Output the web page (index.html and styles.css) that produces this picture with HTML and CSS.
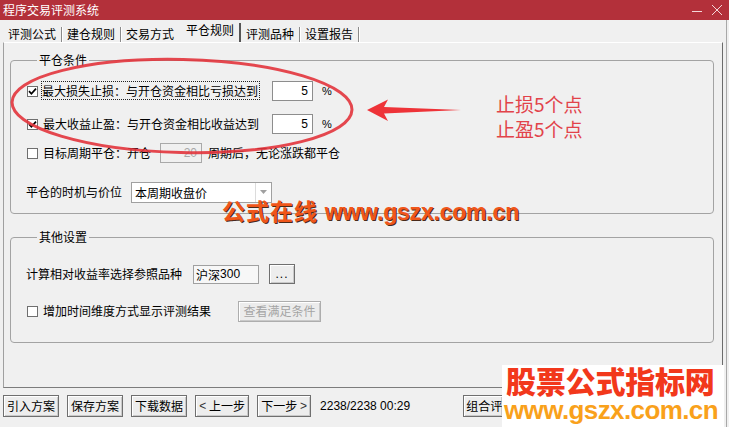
FILE: index.html
```html
<!DOCTYPE html>
<html lang="zh-CN">
<head>
<meta charset="utf-8">
<title>程序交易评测系统</title>
<link rel="stylesheet" href="styles.css">
</head>
<body>
<div class="titlebar">
  <span class="title">程序交易评测系统</span>
  <div class="winctl">
    <svg class="ctl" width="12" height="12" viewBox="0 0 12 12"><line x1="1" y1="7.5" x2="11" y2="7.5" stroke="#f3d6d8" stroke-width="1"/></svg>
    <svg class="ctl" width="12" height="12" viewBox="0 0 12 12"><path d="M1 1 L11 11 M11 1 L1 11" stroke="#f3d6d8" stroke-width="1" fill="none"/></svg>
  </div>
</div>
<div class="main">
  <div class="tabs">
    <span class="tab">评测公式</span>
    <span class="tab">建仓规则</span>
    <span class="tab nosep">交易方式</span>
    <span class="tab active">平仓规则</span>
    <span class="tab">评测品种</span>
    <span class="tab">设置报告</span>
  </div>
  <div class="panel">
    <fieldset class="group g1">
      <legend>平仓条件</legend>
      <div class="row r1">
        <span class="cb checked"><svg width="9" height="9" viewBox="0 0 9 9"><path d="M1 4.2 L3.4 6.8 L8 1.6" stroke="#000" stroke-width="1.7" fill="none"/></svg></span>
        <span class="lbl fixed"><span class="focus">最大损失止损：与开仓资金相比亏损达到</span></span>
        <span class="field num">5</span>
        <span class="pct">%</span>
      </div>
      <div class="row r2">
        <span class="cb checked"><svg width="9" height="9" viewBox="0 0 9 9"><path d="M1 4.2 L3.4 6.8 L8 1.6" stroke="#000" stroke-width="1.7" fill="none"/></svg></span>
        <span class="lbl fixed">最大收益止盈：与开仓资金相比收益达到</span>
        <span class="field num">5</span>
        <span class="pct">%</span>
      </div>
      <div class="row r3">
        <span class="cb"></span>
        <span class="lbl">目标周期平仓：开仓</span>
        <span class="field num disabled">20</span>
        <span class="lbl after">周期后，无论涨跌都平仓</span>
      </div>
      <div class="row r4">
        <span class="lbl plain">平仓的时机与价位</span>
        <div class="select">
          <span class="select-text">本周期收盘价</span>
          <span class="select-btn"><svg width="7" height="4" viewBox="0 0 7 4"><path d="M0 0 L7 0 L3.5 4 Z" fill="#a0a0a0"/></svg></span>
        </div>
      </div>
    </fieldset>
    <fieldset class="group g2">
      <legend>其他设置</legend>
      <div class="row ra">
        <span class="lbl plain">计算相对收益率选择参照品种</span>
        <span class="field ref">沪深<span class="digits">300</span></span>
        <span class="btn dots">...</span>
      </div>
      <div class="row rb">
        <span class="cb"></span>
        <span class="lbl">增加时间维度方式显示评测结果</span>
        <span class="btn disabled-btn">查看满足条件</span>
      </div>
    </fieldset>
  </div>
  <div class="bottombar">
    <span class="btn bb">引入方案</span>
    <span class="btn bb">保存方案</span>
    <span class="btn bb">下载数据</span>
    <span class="btn bb"><span class="ang">&lt;</span>&nbsp;上一步</span>
    <span class="btn bb">下一步&nbsp;<span class="ang">&gt;</span></span>
    <span class="status">2238/2238 00:29</span>
    <span class="btn bb combo">组合评</span>
  </div>
</div>

<svg class="annot" width="729" height="427" viewBox="0 0 729 427">
  <ellipse cx="182" cy="106" rx="170" ry="46.5" transform="rotate(1.3 182 106)" fill="none" stroke="#e2343c" stroke-width="3" opacity="0.9"/>
  <path d="M367 110 L388 99.5 L384 107 L461 110 L384 113.5 L388 121 Z" fill="#ee3338"/>
</svg>
<div class="note">止损5个点<br>止盈5个点</div>
<div class="wm-center"><span class="wm-cn">公式在线</span> <span class="wm-url">www.gszx.com.cn</span></div>
<div class="wm-corner">
  <div class="wm-title">股票公式指标网</div>
  <div class="wm-site">www.gszx.com.cn</div>
</div>
</body>
</html>
```
FILE: styles.css
```css
* { box-sizing: border-box; }
html, body { margin: 0; padding: 0; }
body {
  width: 729px;
  height: 427px;
  overflow: hidden;
  background: #f0f0f0;
  font-family: "Noto Sans CJK SC", "Liberation Sans", sans-serif;
  font-size: 12px;
  color: #000;
  position: relative;
}

.titlebar {
  height: 20px;
  background: #b3303a;
  color: #fff;
  display: flex;
  align-items: center;
  justify-content: space-between;
  padding-left: 3px;
  padding-right: 6px;
  line-height: 16px;
}
.title { font-size: 12px; }
.winctl { display: flex; gap: 8px; align-items: center; }
.ctl { display: block; }

.main {
  width: 727px;
  height: 407px;
  border-right: 1px solid #a8a8a8;
}

.tabs {
  height: 22px;
  display: flex;
  align-items: flex-end;
  padding-left: 3px;
}
.tab {
  height: 16px;
  line-height: 16px;
  padding: 0 6px 0 5px;
  position: relative;
  color: #000;
}
.tab::after {
  content: "";
  position: absolute;
  right: 0;
  top: 1px;
  bottom: 0;
  width: 1px;
  background: #8a8a8a;
  box-shadow: 1px 0 0 #ffffff;
}
.tab.nosep::after { display: none; }
.tab.active {
  line-height: 12px;
  padding-left: 6px;
  padding-right: 7px;
  height: 18px;
}
.tab.active::after {
  width: 2px;
  top: -1px;
  background: #555;
  box-shadow: none;
}

.panel {
  margin-left: 3px;
  width: 720px;
  height: 346px;
  border-top: 1px solid #ffffff;
  border-left: 1px solid #a0a0a0;
  border-right: 1px solid #6c6c6c;
  border-bottom: 1px solid #7c7c7c;
  padding: 0 8px 0 6px;
  overflow: hidden;
}

.group {
  margin: 0;
  padding: 0 0 0 16px;
  border: 1px solid #a3a3a3;
  border-radius: 4px;
  min-width: 0;
}
.group legend {
  margin-left: 10px;
  padding: 0 2px;
  line-height: 16px;
  height: 16px;
}
.g1 { margin-top: 9px; padding-bottom: 10px; }
.g2 { margin-top: 15px; padding-bottom: 20px; }

.row {
  display: flex;
  align-items: center;
  height: 22px;
}
.r1 { margin-top: 12px; }
.r2 { margin-top: 11px; }
.r3 { margin-top: 7px; }
.r4 { margin-top: 17px; height: 22px; }
.ra { margin-top: 19px; height: 20px; }
.rb { margin-top: 16px; height: 22px; }

.cb {
  width: 11px;
  height: 11px;
  border: 1px solid #6f6f6f;
  background: #fff;
  display: flex;
  align-items: center;
  justify-content: center;
  flex: none;
  margin-right: 5px;
}
.cb svg { display: block; }

.lbl { line-height: 16px; white-space: nowrap; }
.lbl.fixed { width: 229px; }
.lbl.plain { margin-left: -1px; }
.focus { outline: 1px dotted #222; outline-offset: 0; padding: 0 1px 0 0; margin-left: -1px; }
.lbl.after { margin-left: 6px; }

.field {
  height: 20px;
  background: #fff;
  border: 1px solid #8d8d8d;
  display: flex;
  align-items: center;
  white-space: nowrap;
}
.field.num {
  width: 41px;
  justify-content: flex-end;
  padding-right: 4px;
  font-family: "Liberation Sans", sans-serif;
  font-size: 12px;
}
.r3 .field.num { margin-left: 9px; width: 42px; }
.field.disabled {
  background: #f0f0f0;
  border-color: #a9a9a9;
  color: #a8a8a8;
}
.pct {
  margin-left: 9px;
  font-family: "Liberation Sans", sans-serif;
  font-size: 11px;
}

.select {
  margin-left: 9px;
  width: 141px;
  height: 21px;
  background: #fff;
  border: 1px solid #a0a0a0;
  display: flex;
  align-items: center;
}
.select-text { flex: 1; padding-left: 3px; }
.select-btn {
  width: 16px;
  height: 19px;
  border-left: 1px solid #dcdcdc;
  display: flex;
  align-items: center;
  justify-content: center;
}
.select-btn svg { display: block; }

.field.ref {
  margin-left: 11px;
  width: 66px;
  height: 19px;
  padding-left: 2px;
  background: #f7f7f7;
  border-color: #a0a0a0;
}
.digits { font-family: "Liberation Sans", sans-serif; font-size: 12px; }

.btn {
  display: flex;
  align-items: center;
  justify-content: center;
  height: 22px;
  border: 1px solid #6f6f6f;
  background: #ededed;
  box-shadow: inset 1px 1px 0 #ffffff, inset -1px -1px 0 #c9c9c9;
  white-space: nowrap;
  line-height: 16px;
}
.btn.dots {
  margin-left: 10px;
  width: 26px;
  height: 20px;
  font-family: "Liberation Sans", sans-serif;
  letter-spacing: 1px;
  align-items: flex-end;
  padding-bottom: 5px;
  line-height: 8px;
}
.btn.disabled-btn {
  margin-left: 27px;
  width: 83px;
  height: 21px;
  color: #a4a4a4;
  border-color: #adadad;
  background: #ececec;
}

.bottombar {
  display: flex;
  align-items: center;
  padding: 7px 0 0 3px;
  gap: 8px;
}
.btn.bb { padding: 0 3px; min-width: 54px; }
.ang { font-family: "Liberation Sans", sans-serif; color: #333; }
.status {
  margin-left: 1px;
  font-family: "Liberation Sans", sans-serif;
  font-size: 12px;
}
.btn.combo {
  margin-left: 45px;
  justify-content: flex-start;
  padding-left: 2px;
  min-width: 0;
  width: 40px;
  overflow: hidden;
}

.annot {
  position: absolute;
  left: 0;
  top: 0;
  pointer-events: none;
}

.note {
  position: absolute;
  left: 496px;
  top: 91px;
  font-size: 19px;
  line-height: 25px;
  color: #e2434a;
}

.wm-center {
  position: absolute;
  left: 222px;
  top: 196px;
  color: #f0561a;
  font-weight: 700;
  white-space: nowrap;
  text-shadow: 1px 1px 0 #4a2a1a;
  line-height: 28px;
}
.wm-cn { font-size: 23px; letter-spacing: 1px; font-family: "Noto Sans CJK SC", sans-serif; }
.wm-url { font-family: "Liberation Sans", sans-serif; font-size: 23px; letter-spacing: -0.2px; margin-left: 4px; }

.wm-corner {
  position: absolute;
  left: 502px;
  top: 365px;
  width: 222px;
  height: 62px;
  background: #ffffff;
  padding-left: 4px;
}
.wm-title {
  font-size: 30px;
  font-weight: 900;
  color: #f2381b;
  line-height: 31px;
  height: 32px;
  white-space: nowrap;
  letter-spacing: -0.2px;
}
.wm-site {
  font-family: "Liberation Sans", sans-serif;
  font-weight: 700;
  font-size: 26px;
  letter-spacing: -0.6px;
  color: #f9a11b;
  line-height: 26px;
  margin-left: -2px;
  white-space: nowrap;
}
```
